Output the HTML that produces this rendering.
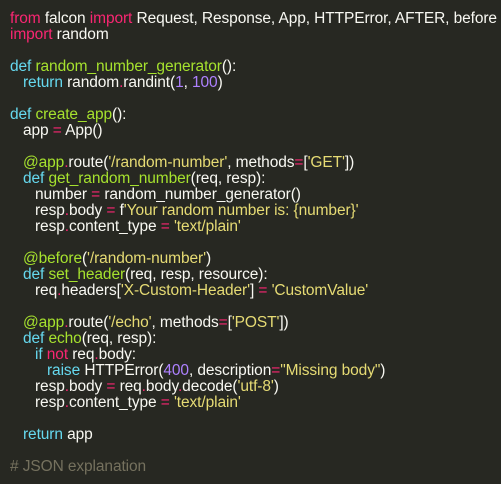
<!DOCTYPE html>
<html><head><style>
body{margin:0;background:#272822;width:501px;height:484px;overflow:hidden}
.c{font-family:"Liberation Sans",sans-serif;font-size:15.5px;line-height:16px;color:#f8f8f2;padding:11px 0 0 10px;letter-spacing:-0.1px}
.l{height:16px;white-space:pre}
.i1{padding-left:13px}.i2{padding-left:25px}.i3{padding-left:37px}
.k{color:#f92672}.d{color:#66d9ef}.f{color:#a6e22e}.s{color:#e6db74}.n{color:#ae81ff}.m{color:#75715e}
</style></head><body><div class="c"><div class="l"><span class="k">from</span> falcon <span class="k">import</span> Request, Response, App, HTTPError, AFTER, before</div><div class="l"><span class="k">import</span> random</div><div class="l"></div><div class="l"><span class="d">def</span> <span class="f">random_number_generator</span>():</div><div class="l i1"><span class="d">return</span> random<span class="k">.</span>randint(<span class="n">1</span>, <span class="n">100</span>)</div><div class="l"></div><div class="l"><span class="d">def</span> <span class="f">create_app</span>():</div><div class="l i1">app <span class="k">=</span> App()</div><div class="l"></div><div class="l i1"><span class="f">@app</span><span class="k">.</span>route(<span class="s">'/random-number'</span>, methods<span class="k">=</span>[<span class="s">'GET'</span>])</div><div class="l i1"><span class="d">def</span> <span class="f">get_random_number</span>(req, resp):</div><div class="l i2">number <span class="k">=</span> random_number_generator()</div><div class="l i2">resp<span class="k">.</span>body <span class="k">=</span> f<span class="s">'Your random number is: {number}'</span></div><div class="l i2">resp<span class="k">.</span>content_type <span class="k">=</span> <span class="s">'text/plain'</span></div><div class="l"></div><div class="l i1"><span class="f">@before</span>(<span class="s">'/random-number'</span>)</div><div class="l i1"><span class="d">def</span> <span class="f">set_header</span>(req, resp, resource):</div><div class="l i2">req<span class="k">.</span>headers[<span class="s">'X-Custom-Header'</span>] <span class="k">=</span> <span class="s">'CustomValue'</span></div><div class="l"></div><div class="l i1"><span class="f">@app</span><span class="k">.</span>route(<span class="s">'/echo'</span>, methods<span class="k">=</span>[<span class="s">'POST'</span>])</div><div class="l i1"><span class="d">def</span> <span class="f">echo</span>(req, resp):</div><div class="l i2"><span class="d">if</span> <span class="k">not</span> req<span class="k">.</span>body:</div><div class="l i3"><span class="d">raise</span> HTTPError(<span class="n">400</span>, description<span class="k">=</span><span class="s">"Missing body"</span>)</div><div class="l i2">resp<span class="k">.</span>body <span class="k">=</span> req<span class="k">.</span>body<span class="k">.</span>decode(<span class="s">'utf-8'</span>)</div><div class="l i2">resp<span class="k">.</span>content_type <span class="k">=</span> <span class="s">'text/plain'</span></div><div class="l"></div><div class="l i1"><span class="d">return</span> app</div><div class="l"></div><div class="l"><span class="m"># JSON explanation</span></div></div></body></html>
